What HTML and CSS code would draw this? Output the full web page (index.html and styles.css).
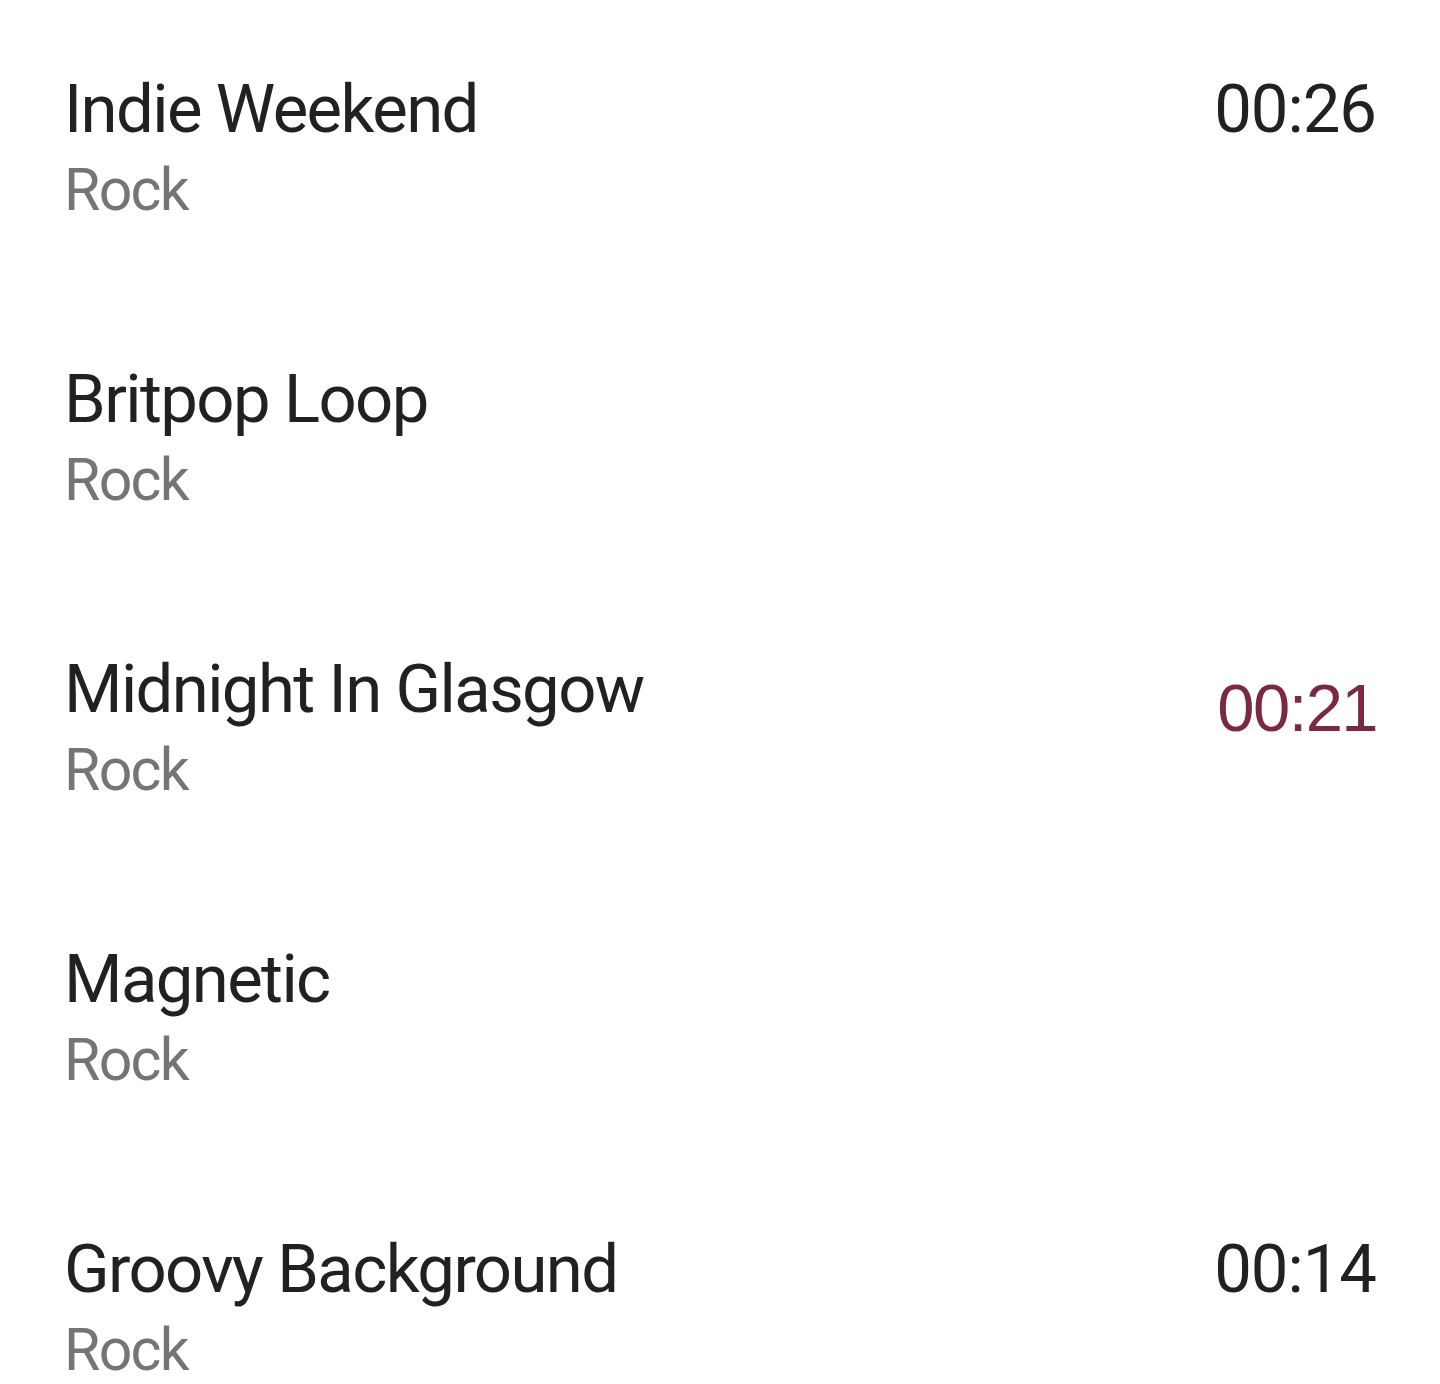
FILE: index.html
```html
<!DOCTYPE html>
<html>
<head>
<meta charset="utf-8">
<link rel="stylesheet" href="styles.css">
</head>
<body>
<ul class="list">
  <li class="row">
    <div class="info"><div class="title">Indie Weekend</div><div class="genre">Rock</div></div>
    <div class="time">00:26</div>
  </li>
  <li class="row">
    <div class="info"><div class="title">Britpop Loop</div><div class="genre">Rock</div></div>
  </li>
  <li class="row">
    <div class="info"><div class="title">Midnight In Glasgow</div><div class="genre">Rock</div></div>
    <div class="time time-active">00:21</div>
  </li>
  <li class="row">
    <div class="info"><div class="title">Magnetic</div><div class="genre">Rock</div></div>
  </li>
  <li class="row">
    <div class="info"><div class="title">Groovy Background</div><div class="genre">Rock</div></div>
    <div class="time">00:14</div>
  </li>
</ul>
</body>
</html>
```
FILE: styles.css
```css
html, body {
  margin: 0;
  padding: 0;
  background: #ffffff;
}
body {
  font-family: Roboto, "Noto Sans", sans-serif;
  width: 1440px;
  height: 1384px;
  overflow: hidden;
}
.list {
  list-style: none;
  margin: 0;
  padding: 0;
}
.row {
  height: 290px;
  box-sizing: border-box;
  padding: 69px 64px 0 64px;
  display: flex;
  justify-content: space-between;
  align-items: flex-start;
}
.title {
  font-size: 67px;
  line-height: 80px;
  color: #212121;
  white-space: nowrap;
  letter-spacing: -1.6px;
}
.genre {
  font-size: 59px;
  line-height: 70px;
  margin-top: 6px;
  color: #757575;
  letter-spacing: -1.7px;
}
.time {
  font-size: 67px;
  line-height: 80px;
  color: #212121;
  letter-spacing: -1px;
}
.time-active {
  font-family: "Liberation Sans", Arial, sans-serif;
  color: #7a2940;
  margin-top: 19px;
  letter-spacing: -1.6px;
  margin-right: -1px;
}
```
